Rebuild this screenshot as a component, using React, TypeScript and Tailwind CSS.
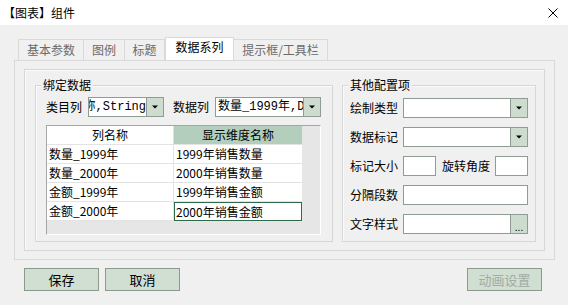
import React from 'react';

type ComboProps = {
    width: string;
    text?: string;
    clipLeft?: boolean;
    button?: 'caret' | 'dots';
};

const Caret: React.FC = () => (
    <svg width="6" height="4" viewBox="0 0 6 4">
        <path d="M0 0.5h6L3 3.5z" fill="#000" />
    </svg>
);

const Combo: React.FC<ComboProps> = ({ width, text, clipLeft, button = 'caret' }) => {
    return (
        <div className={`flex h-[20px] border border-[#8f9c91] bg-white ${width}`}>
            <div
                className={`flex flex-1 items-center overflow-hidden whitespace-nowrap pl-[2px] font-[family-name:'Liberation_Mono','Noto_Sans_CJK_SC',monospace] text-[12px] leading-[18px] ${
                    clipLeft ? 'justify-end' : 'justify-start'
                }`}
            >
                {text}
            </div>
            <div className="flex w-[17px] items-center justify-center border-l border-[#8f9c91] bg-[#cddccf]">
                {button === 'caret' ? <Caret /> : <span className="text-[10px] leading-[10px] pt-[6px]">...</span>}
            </div>
        </div>
    );
};

const Box: React.FC<{ width: string }> = ({ width }) => (
    <div className={`h-[20px] border border-[#8f9c91] bg-white ${width}`} />
);

const Group: React.FC<{ title: string; className: string; children: React.ReactNode }> = ({
    title,
    className,
    children,
}) => (
    <div className={`relative border border-[#d6d6d6] shadow-[inset_1px_1px_0_#fbfbfb] ${className}`}>
        <span className="absolute -top-[9px] left-[5px] bg-[#f0f0f0] px-[2px] text-[12px] leading-[16px]">
            {title}
        </span>
        {children}
    </div>
);

const rows = [
    ['数量_1999年', '1999年销售数量'],
    ['数量_2000年', '2000年销售数量'],
    ['金额_1999年', '1999年销售金额'],
    ['金额_2000年', '2000年销售金额'],
];

const tabs = [
    { label: '基本参数', w: 'w-[66px]' },
    { label: '图例', w: 'w-[42px]' },
    { label: '标题', w: 'w-[41px]' },
    { label: '数据系列', w: 'w-[69px]', active: true },
    { label: '提示框/工具栏', w: 'w-[95px]' },
];

const Button: React.FC<{ label: string; disabled?: boolean }> = ({ label, disabled }) => (
    <div
        className={`flex h-[23px] w-[75px] items-center justify-center border border-[#8b9a8d] bg-[#d0dfd2] text-[13px] leading-none ${
            disabled ? 'text-[#a3aba4]' : 'text-black'
        }`}
    >
        {label}
    </div>
);

const App: React.FC = () => {
    return (
        <div className="h-[305px] w-[568px] overflow-hidden bg-[#f0f0f0] font-[family-name:'Noto_Sans_CJK_SC',sans-serif] text-[12px] text-black">
            <div className="flex h-[25px] items-center justify-between bg-white pl-[3px] pr-[10px]">
                <span className="text-[12px] leading-none">【图表】组件</span>
                <svg width="10" height="10" viewBox="0 0 10 10">
                    <path d="M0.5 0.5L9.5 9.5M9.5 0.5L0.5 9.5" stroke="#000" strokeWidth="1" />
                </svg>
            </div>

            <div className="pl-[14px] pt-[12px]">
                <div className="flex h-[23px] items-end pl-[4px]">
                    {tabs.map((tab) =>
                        tab.active ? (
                            <div
                                key={tab.label}
                                className={`flex h-[23px] items-start justify-center border border-b-0 border-[#d9d9d9] bg-white pt-[1px] text-[12px] leading-[16px] text-black ${tab.w}`}
                            >
                                {tab.label}
                            </div>
                        ) : (
                            <div
                                key={tab.label}
                                className={`-ml-px flex h-[21px] items-center justify-center border border-b-0 border-[#d9d9d9] bg-[#f0f0f0] text-[12px] leading-none text-[#6b6b6b] first:ml-0 ${tab.w}`}
                            >
                                {tab.label}
                            </div>
                        ),
                    )}
                </div>

                <div className="h-[200px] w-[541px] border border-[#d9d9d9] pl-[9px] pt-[8px]">
                    <div className="flex h-[182px] w-[521px] gap-[9px] border border-[#d6d6d6] pl-[10px] pt-[15px] shadow-[inset_1px_1px_0_#fbfbfb]">
                        <Group title="绑定数据" className="h-[157px] w-[298px] pl-[10px] pt-[11px]">
                            <div className="flex h-[20px] items-center">
                                <span className="w-[36px] leading-none">类目列</span>
                                <div className="ml-[6px]">
                                    <Combo width="w-[76px]" text="称,String" clipLeft />
                                </div>
                                <span className="ml-[9px] w-[36px] leading-none">数据列</span>
                                <div className="ml-[6px]">
                                    <Combo width="w-[106px]" text="数量_1999年,Do" />
                                </div>
                            </div>

                            <div className="mt-[8px] flex h-[110px] w-[275px] flex-col border-l border-t border-[#a6a6a6] border-r border-b border-r-white border-b-white bg-[#e6e6e6]">
                                <div className="flex h-[19px]">
                                    <div className="flex w-[127px] items-center justify-center border-r border-b border-[#e3e3e3] bg-white leading-none">
                                        列名称
                                    </div>
                                    <div className="flex w-[128px] items-center justify-center border-b border-[#e3e3e3] bg-[#b4cebe] leading-none">
                                        显示维度名称
                                    </div>
                                </div>
                                {rows.map(([name, display], i) => (
                                    <div key={name} className="flex h-[19px]">
                                        <div className="flex w-[127px] items-center border-r border-b border-[#e3e3e3] bg-white pl-[2px] leading-none">
                                            {name}
                                        </div>
                                        <div
                                            className={`flex w-[128px] items-center bg-white pl-[1px] leading-none ${
                                                i === rows.length - 1
                                                    ? 'border border-[#2f6a4d]'
                                                    : 'border-b border-[#e3e3e3] pl-[2px]'
                                            }`}
                                        >
                                            {display}
                                        </div>
                                    </div>
                                ))}
                            </div>
                        </Group>

                        <Group title="其他配置项" className="flex h-[157px] w-[194px] flex-col gap-[9px] pl-[7px] pt-[12px]">
                            <div className="flex h-[20px] items-center">
                                <span className="w-[48px] leading-none">绘制类型</span>
                                <div className="ml-[5px]">
                                    <Combo width="w-[125px]" />
                                </div>
                            </div>
                            <div className="flex h-[20px] items-center">
                                <span className="w-[48px] leading-none">数据标记</span>
                                <div className="ml-[5px]">
                                    <Combo width="w-[125px]" />
                                </div>
                            </div>
                            <div className="flex h-[20px] items-center">
                                <span className="w-[48px] leading-none">标记大小</span>
                                <div className="ml-[5px]">
                                    <Box width="w-[33px]" />
                                </div>
                                <span className="ml-[6px] w-[48px] leading-none">旋转角度</span>
                                <div className="ml-[5px]">
                                    <Box width="w-[33px]" />
                                </div>
                            </div>
                            <div className="flex h-[20px] items-center">
                                <span className="w-[48px] leading-none">分隔段数</span>
                                <div className="ml-[5px]">
                                    <Box width="w-[125px]" />
                                </div>
                            </div>
                            <div className="flex h-[20px] items-center">
                                <span className="w-[48px] leading-none">文字样式</span>
                                <div className="ml-[5px]">
                                    <Combo width="w-[125px]" button="dots" />
                                </div>
                            </div>
                        </Group>
                    </div>
                </div>
            </div>

            <div className="mt-[8px] flex pl-[24px] pr-[26px]">
                <div className="flex gap-[6px]">
                    <Button label="保存" />
                    <Button label="取消" />
                </div>
                <div className="ml-auto">
                    <Button label="动画设置" disabled />
                </div>
            </div>
        </div>
    );
};

export default App;
